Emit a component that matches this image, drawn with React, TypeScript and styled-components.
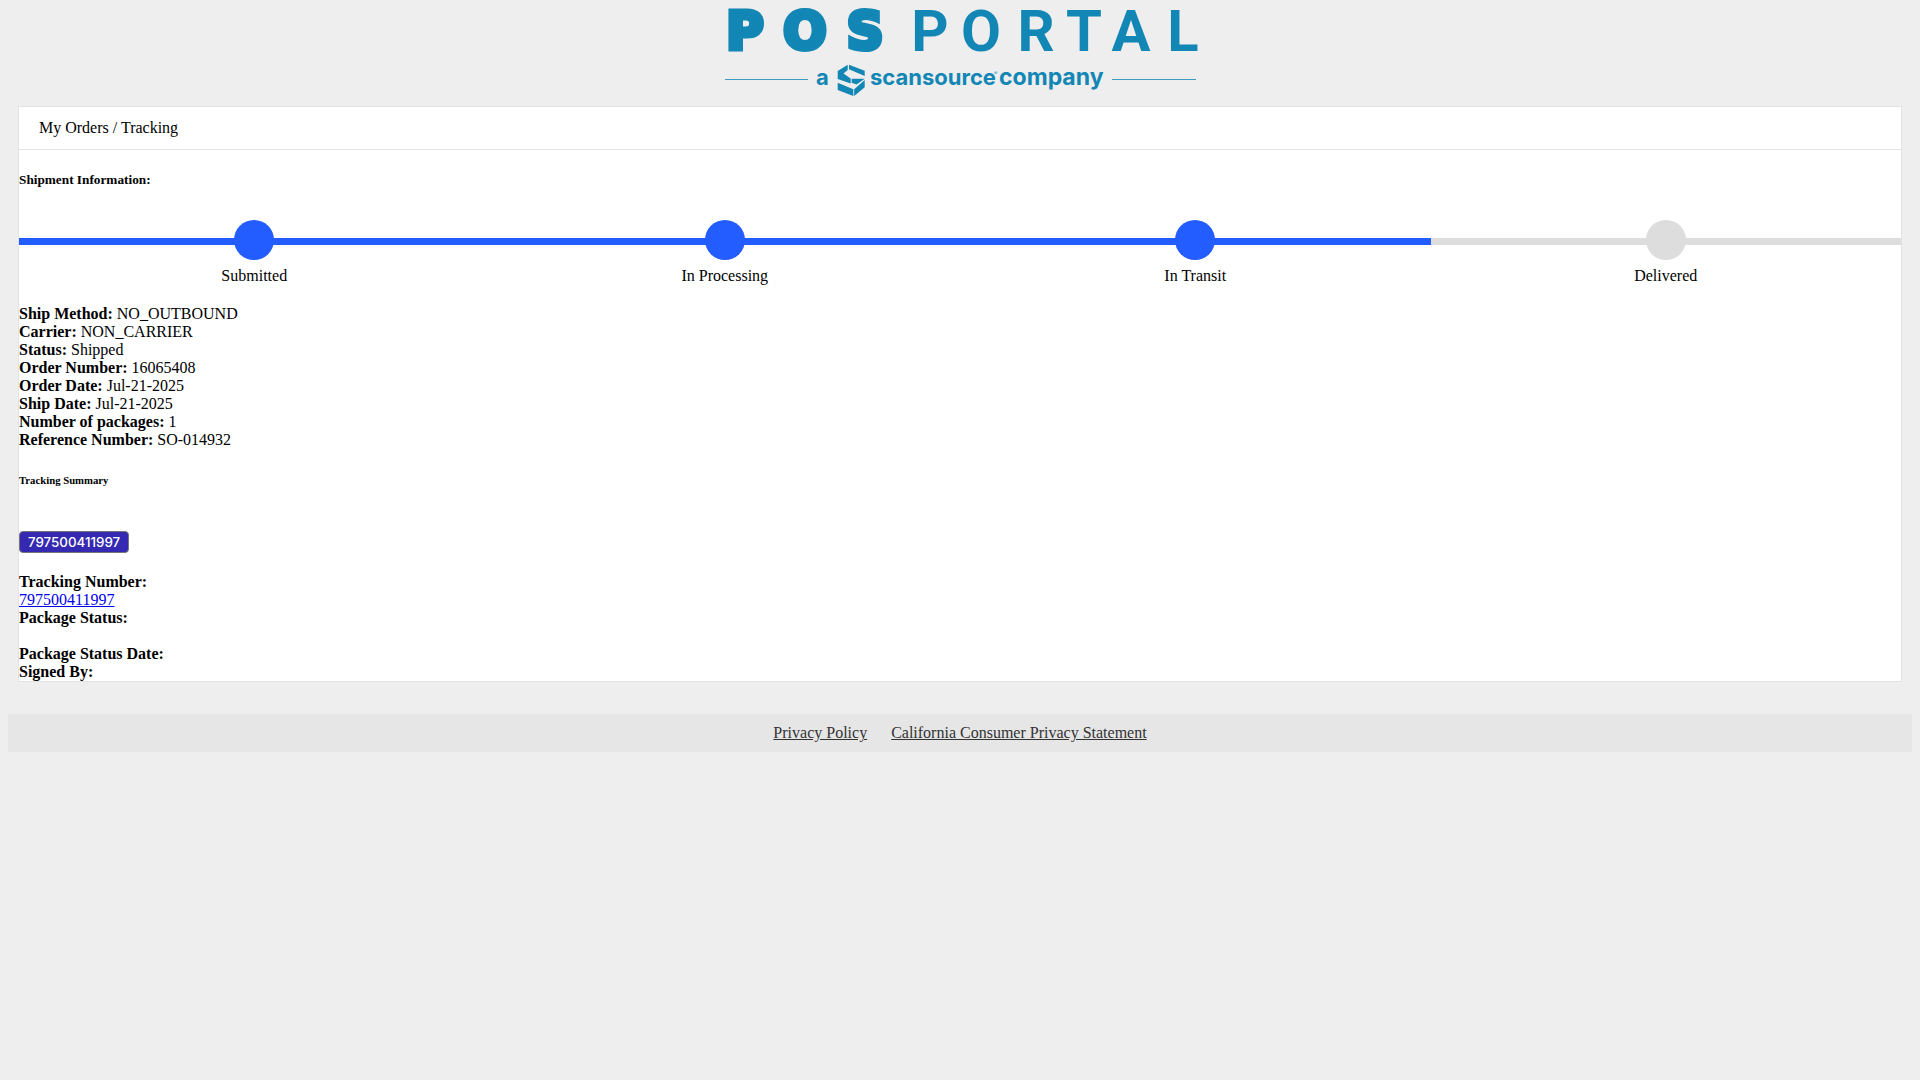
import React from "react";
import styled, { createGlobalStyle } from "styled-components";

const GlobalStyle = createGlobalStyle`
  body {
    margin: 8px;
    background: #eeeeee;
    color: #000000;
    font-family: "Liberation Serif", "Times New Roman", serif;
    font-size: 16px;
    line-height: 18px;
  }
  h5, h6 { line-height: normal; }
`;

const LogoBar = styled.header`
  display: flex;
  justify-content: center;
`;

const LogoArt = styled.svg`
  display: block;
  overflow: visible;
  fill: #1286b4;
`;

const Wordmark = styled.text<{ $weight: number; $size: number; $family: string }>`
  font-family: ${(p) => p.$family}, sans-serif;
  font-weight: ${(p) => p.$weight};
  font-size: ${(p) => p.$size}px;
`;

const Card = styled.main`
  margin: 10px;
  background: #ffffff;
  border: 1px solid #e3e3e3;
`;

const Breadcrumb = styled.nav`
  padding: 12px 20px;
  border-bottom: 1px solid #e3e3e3;
`;

const Steps = styled.ol`
  display: flex;
  margin: 0 0 20px;
  padding: 10px 0 0;
  list-style: none;
`;

const Step = styled.li<{ $done: boolean }>`
  flex: 1;
  display: flex;
  flex-direction: column;
  align-items: center;
  gap: 7px;
  --step: ${(p) => (p.$done ? "#235cff" : "#dddddd")};
`;

const Track = styled.div`
  align-self: stretch;
  display: flex;
  justify-content: center;
  background: linear-gradient(var(--step), var(--step)) 0 18px / 100% 7px no-repeat;
`;

const Dot = styled.span`
  width: 40px;
  height: 40px;
  border-radius: 50%;
  background: var(--step);
`;

const Details = styled.dl`
  margin: 0;
`;

const Detail = styled.div`
  display: flex;
  gap: 4px;
`;

const Term = styled.dt`
  font-weight: bold;
`;

const Value = styled.dd`
  margin: 0;
  min-height: 18px;
`;

const Packages = styled.section`
  display: flex;
  flex-direction: column;
  align-items: flex-start;
  gap: 20px;
  padding-top: 20px;
`;

const PackageButton = styled.button`
  height: 22px;
  padding: 0 8px;
  border: 1px solid #767676;
  border-radius: 4px;
  background: #3429b0;
  color: #ffffff;
  font-family: Inter, sans-serif;
  font-size: smaller;
  font-weight: 500;
  line-height: 20px;
`;

const Footer = styled.footer`
  display: flex;
  justify-content: center;
  gap: 24px;
  margin-top: 32px;
  padding: 10px;
  background: #e6e6e6;
`;

const FooterLink = styled.a`
  color: #333333;
`;

const steps = [
  { label: "Submitted", done: true },
  { label: "In Processing", done: true },
  { label: "In Transit", done: true },
  { label: "Delivered", done: false },
];

const shipment = [
  ["Ship Method:", "NO_OUTBOUND"],
  ["Carrier:", "NON_CARRIER"],
  ["Status:", "Shipped"],
  ["Order Number:", "16065408"],
  ["Order Date:", "Jul-21-2025"],
  ["Ship Date:", "Jul-21-2025"],
  ["Number of packages:", "1"],
  ["Reference Number:", "SO-014932"],
];

function Logo() {
  return (
    <LogoArt width="472" height="88" viewBox="0 0 472 88" role="img" aria-label="POS Portal, a ScanSource company">
      <Wordmark $family="'DejaVu Sans'" $weight={700} $size={51} x="21 81 141" y="41" textAnchor="middle" stroke="#1286b4" strokeWidth="5">
        POS
      </Wordmark>
      <Wordmark $family="Roboto" $weight={700} $size={58} x="206 257 312 360 407 459" y="43" textAnchor="middle">
        PORTAL
      </Wordmark>
      <rect x="1" y="71" width="83" height="1" opacity="0.8" />
      <rect x="388" y="71" width="84" height="1" opacity="0.8" />
      <Wordmark $family="Inter" $weight={700} $size={22} x="92" y="77">a</Wordmark>
      <path d="M113.700 63 L123.700 56.700 V62 L119.500 65.500 L126.700 70.500 V75.500 L113.700 71Z" />
      <path d="M125 56.700 L140.700 62.700 V68 L125 61.300Z" />
      <path d="M127.700 70.700 H140.700 L132.500 76.500 L127.700 74.700Z" />
      <path d="M140.700 72 V79.300 L130.200 88 V81.300Z" />
      <path d="M113.700 74.700 L129.300 81.300 V88 L113.700 82Z" />
      <Wordmark $family="Inter" $weight={700} $size={22} x="146" y="77">scansource</Wordmark>
      <Wordmark $family="Inter" $weight={400} $size={5} x="270" y="67">®</Wordmark>
      <Wordmark $family="Inter" $weight={700} $size={23} x="275" y="77">company</Wordmark>
    </LogoArt>
  );
}

export default function App() {
  return (
    <>
      <GlobalStyle />
      <LogoBar>
        <Logo />
      </LogoBar>
      <Card>
        <Breadcrumb aria-label="Breadcrumb">My Orders / Tracking</Breadcrumb>
        <h5>Shipment Information:</h5>
        <Steps>
          {steps.map((s) => (
            <Step key={s.label} $done={s.done}>
              <Track>
                <Dot />
              </Track>
              {s.label}
            </Step>
          ))}
        </Steps>
        <Details>
          {shipment.map(([term, value]) => (
            <Detail key={term}>
              <Term>{term}</Term>
              <Value>{value}</Value>
            </Detail>
          ))}
        </Details>
        <h6>Tracking Summary</h6>
        <Packages>
          <PackageButton type="button">797500411997</PackageButton>
          <Details>
            <Term>Tracking Number:</Term>
            <Value>
              <a href="#797500411997">797500411997</a>
            </Value>
            <Term>Package Status:</Term>
            <Value />
            <Term>Package Status Date:</Term>
            <Term>Signed By:</Term>
          </Details>
        </Packages>
      </Card>
      <Footer>
        <FooterLink href="#privacy">Privacy Policy</FooterLink>
        <FooterLink href="#ccpa">California Consumer Privacy Statement</FooterLink>
      </Footer>
    </>
  );
}
